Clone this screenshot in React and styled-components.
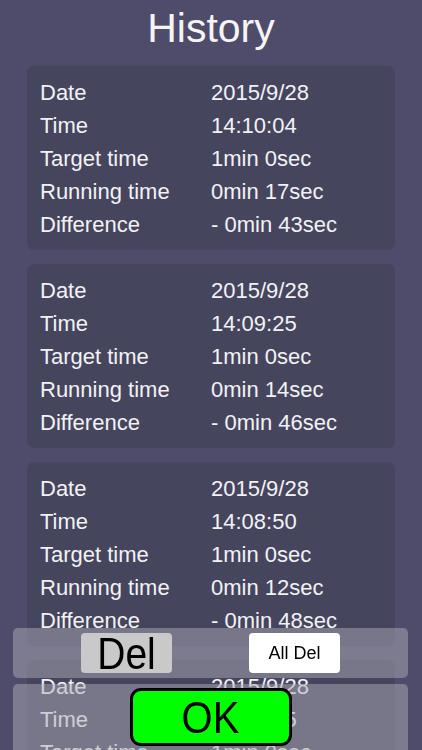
import React from "react";
import styled, { createGlobalStyle } from "styled-components";

const Global = createGlobalStyle`
  html, body { margin: 0; padding: 0; height: 100%; }
  body {
    background: #4e4c6a;
    overflow: hidden;
    font-family: "Liberation Sans", Arial, sans-serif;
  }
`;

const Page = styled.div`
  display: flex;
  flex-direction: column;
  padding: 0 27px;
  height: 750px;
  overflow: hidden;
`;

const Title = styled.h1`
  margin: 0 0 13px;
  padding-top: 3px;
  font-weight: 400;
  font-size: 41px;
  line-height: 50px;
  color: #f4f4f6;
  text-align: center;
`;

const List = styled.div`
  display: flex;
  flex-direction: column;
  gap: 14px;
`;

const Card = styled.div`
  flex: none;
  background: #46455e;
  border-radius: 7px;
  padding: 10px 13px 9px;
  display: grid;
  grid-template-columns: 171px 1fr;
  font-size: 22px;
  line-height: 33px;
  color: #f2f2f4;
`;

const Cell = styled.div`
  white-space: nowrap;
`;

const Overlay = styled.div`
  position: fixed;
  left: 13px;
  right: 14px;
  top: 628px;
  display: flex;
  flex-direction: column;
  gap: 6px;
`;

const Panel = styled.div`
  height: ${(p) => p.$h}px;
  background: rgba(170, 170, 180, 0.5);
  border-radius: 5px;
  display: flex;
  align-items: ${(p) => (p.$top ? "flex-start" : "center")};
  justify-content: ${(p) => (p.$center ? "center" : "flex-start")};
  padding: ${(p) => (p.$top ? "4px 0 0" : "0 0 0 68px")};
  gap: 77px;
  box-sizing: border-box;
`;

const SmallButton = styled.div`
  width: 91px;
  height: 40px;
  border-radius: 4px;
  background: ${(p) => (p.$light ? "#ffffff" : "#c9c9c9")};
  display: flex;
  align-items: center;
  justify-content: center;
  color: #000;
  font-size: ${(p) => p.$fs}px;
  line-height: 1;
`;

const Stretch = styled.span`
  display: inline-block;
  transform: scaleY(${(p) => p.$s || 1});
`;

const OkButton = styled.div`
  width: 162px;
  height: 58px;
  box-sizing: border-box;
  border: 3px solid #000;
  border-radius: 11px;
  background: #00ff00;
  display: flex;
  align-items: center;
  justify-content: center;
  color: #000;
  font-size: 40px;
  line-height: 1;
`;

const records = [
  { date: "2015/9/28", time: "14:10:04", target: "1min 0sec", run: "0min 17sec", diff: "- 0min 43sec" },
  { date: "2015/9/28", time: "14:09:25", target: "1min 0sec", run: "0min 14sec", diff: "- 0min 46sec" },
  { date: "2015/9/28", time: "14:08:50", target: "1min 0sec", run: "0min 12sec", diff: "- 0min 48sec" },
  { date: "2015/9/28", time: "14:08:15", target: "1min 0sec", run: "0min 10sec", diff: "- 0min 50sec" },
];

export default function App() {
  return (
    <>
      <Global />
      <Page>
        <Title>History</Title>
        <List>
          {records.map((r, i) => (
            <Card key={i}>
              <Cell>Date</Cell>
              <Cell>{r.date}</Cell>
              <Cell>Time</Cell>
              <Cell>{r.time}</Cell>
              <Cell>Target time</Cell>
              <Cell>{r.target}</Cell>
              <Cell>Running time</Cell>
              <Cell>{r.run}</Cell>
              <Cell>Difference</Cell>
              <Cell>{r.diff}</Cell>
            </Card>
          ))}
        </List>
      </Page>
      <Overlay>
        <Panel $h={50}>
          <SmallButton $fs={39}>
            <Stretch $s={1.12}>Del</Stretch>
          </SmallButton>
          <SmallButton $light $fs={18}>
            All Del
          </SmallButton>
        </Panel>
        <Panel $h={80} $top $center>
          <OkButton>
            <Stretch $s={1.12}>OK</Stretch>
          </OkButton>
        </Panel>
      </Overlay>
    </>
  );
}
